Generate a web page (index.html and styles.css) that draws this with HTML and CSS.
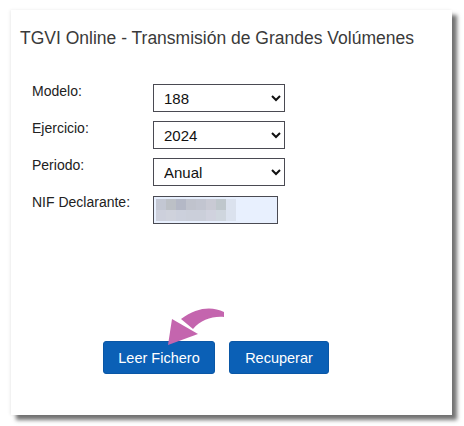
FILE: index.html
```html
<!DOCTYPE html>
<html lang="es">
<head>
<meta charset="utf-8">
<title>TGVI Online</title>
<link rel="stylesheet" href="styles.css">
</head>
<body>
<div class="panel">
  <h1 class="title">TGVI Online - Transmisión de Grandes Volúmenes</h1>
  <div class="form">
    <label class="lbl">Modelo:</label>
    <select class="sel"><option>188</option></select>
    <label class="lbl">Ejercicio:</label>
    <select class="sel"><option>2024</option></select>
    <label class="lbl">Periodo:</label>
    <select class="sel"><option>Anual</option></select>
    <label class="lbl">NIF Declarante:</label>
    <div class="nif">
      <div class="blur">
        <i style="background:#c3c7d3"></i><i style="background:#bcc0c6"></i><i style="background:#b4b8c6"></i><i style="background:#c0c3cd"></i><i style="background:#c2c5d0"></i><i style="background:#c9cad4"></i><i style="background:#bfc7cc"></i><i style="background:#dbe2ee"></i>
        <i style="background:#cdd0dc"></i><i style="background:#cfd2dc"></i><i style="background:#ccd0dc"></i><i style="background:#cbcfda"></i><i style="background:#cbcfda"></i><i style="background:#d0d2de"></i><i style="background:#cfd6de"></i><i style="background:#dbe2ee"></i>
      </div>
    </div>
  </div>
  <div class="actions">
    <button class="btn btn-leer">Leer Fichero</button>
    <button class="btn btn-rec">Recuperar</button>
    <svg class="arrow" width="70" height="50" viewBox="0 0 70 50">
      <path d="M64,13 C52,7 37,8 21,20 L33,30 C41,21 52,17 64,18 Z" fill="#c465ae"/>
      <polygon points="12,20 38,35 8,46" fill="#c465ae"/>
    </svg>
  </div>
</div>
</body>
</html>
```
FILE: styles.css
```css
html, body {
  margin: 0;
  padding: 0;
  background: #ffffff;
  overflow: hidden;
}
body {
  font-family: "Liberation Sans", Arial, sans-serif;
  color: #333333;
  padding: 10px 0 0 11px;
  height: 426px;
  box-sizing: border-box;
}
.panel {
  position: relative;
  width: 441px;
  height: 405px;
  background: #ffffff;
  box-shadow: 5px 5px 4px rgba(0,0,0,0.55), -1px 0 3px rgba(0,0,0,0.08);
  box-sizing: border-box;
  padding: 17px 0 0 9px;
}
.title {
  margin: 0;
  font-size: 17.5px;
  font-weight: normal;
  line-height: 22px;
  color: #3a3a3a;
}
.form {
  display: grid;
  grid-template-columns: 121px auto;
  grid-auto-rows: 28px;
  row-gap: 9px;
  margin: 35px 0 0 12px;
  align-items: start;
}
.lbl {
  font-size: 14px;
  line-height: 16px;
  color: #222222;
  margin-top: -1px;
}
.sel {
  width: 132px;
  height: 28px;
  box-sizing: border-box;
  border: 1px solid #4a4a52;
  border-radius: 0;
  background: #ffffff;
  font-family: "Liberation Sans", Arial, sans-serif;
  font-size: 15px;
  color: #111111;
  padding: 0 0 0 6px;
  margin: 0;
}
.nif {
  width: 125px;
  height: 28px;
  box-sizing: border-box;
  border: 1px solid #4a4a52;
  background: #e8f0fe;
  padding: 2px 0 0 2px;
  margin-top: 1px;
}
.blur {
  display: grid;
  grid-template-columns: repeat(8, 10px);
  grid-auto-rows: 11px;
}
.blur i {
  display: block;
}
.actions {
  display: flex;
  gap: 14px;
  position: relative;
  margin: 118px 0 0 83px;
}
.btn {
  height: 33px;
  box-sizing: border-box;
  border: 1px solid #0a57a6;
  border-radius: 3px;
  background: #0b60b6;
  color: #ffffff;
  font-family: "Liberation Sans", Arial, sans-serif;
  font-size: 14.5px;
  padding: 0;
  margin: 0;
}
.btn-leer { width: 112px; }
.btn-rec { width: 100px; }
.arrow {
  position: absolute;
  left: 57px;
  top: -42px;
}
```
